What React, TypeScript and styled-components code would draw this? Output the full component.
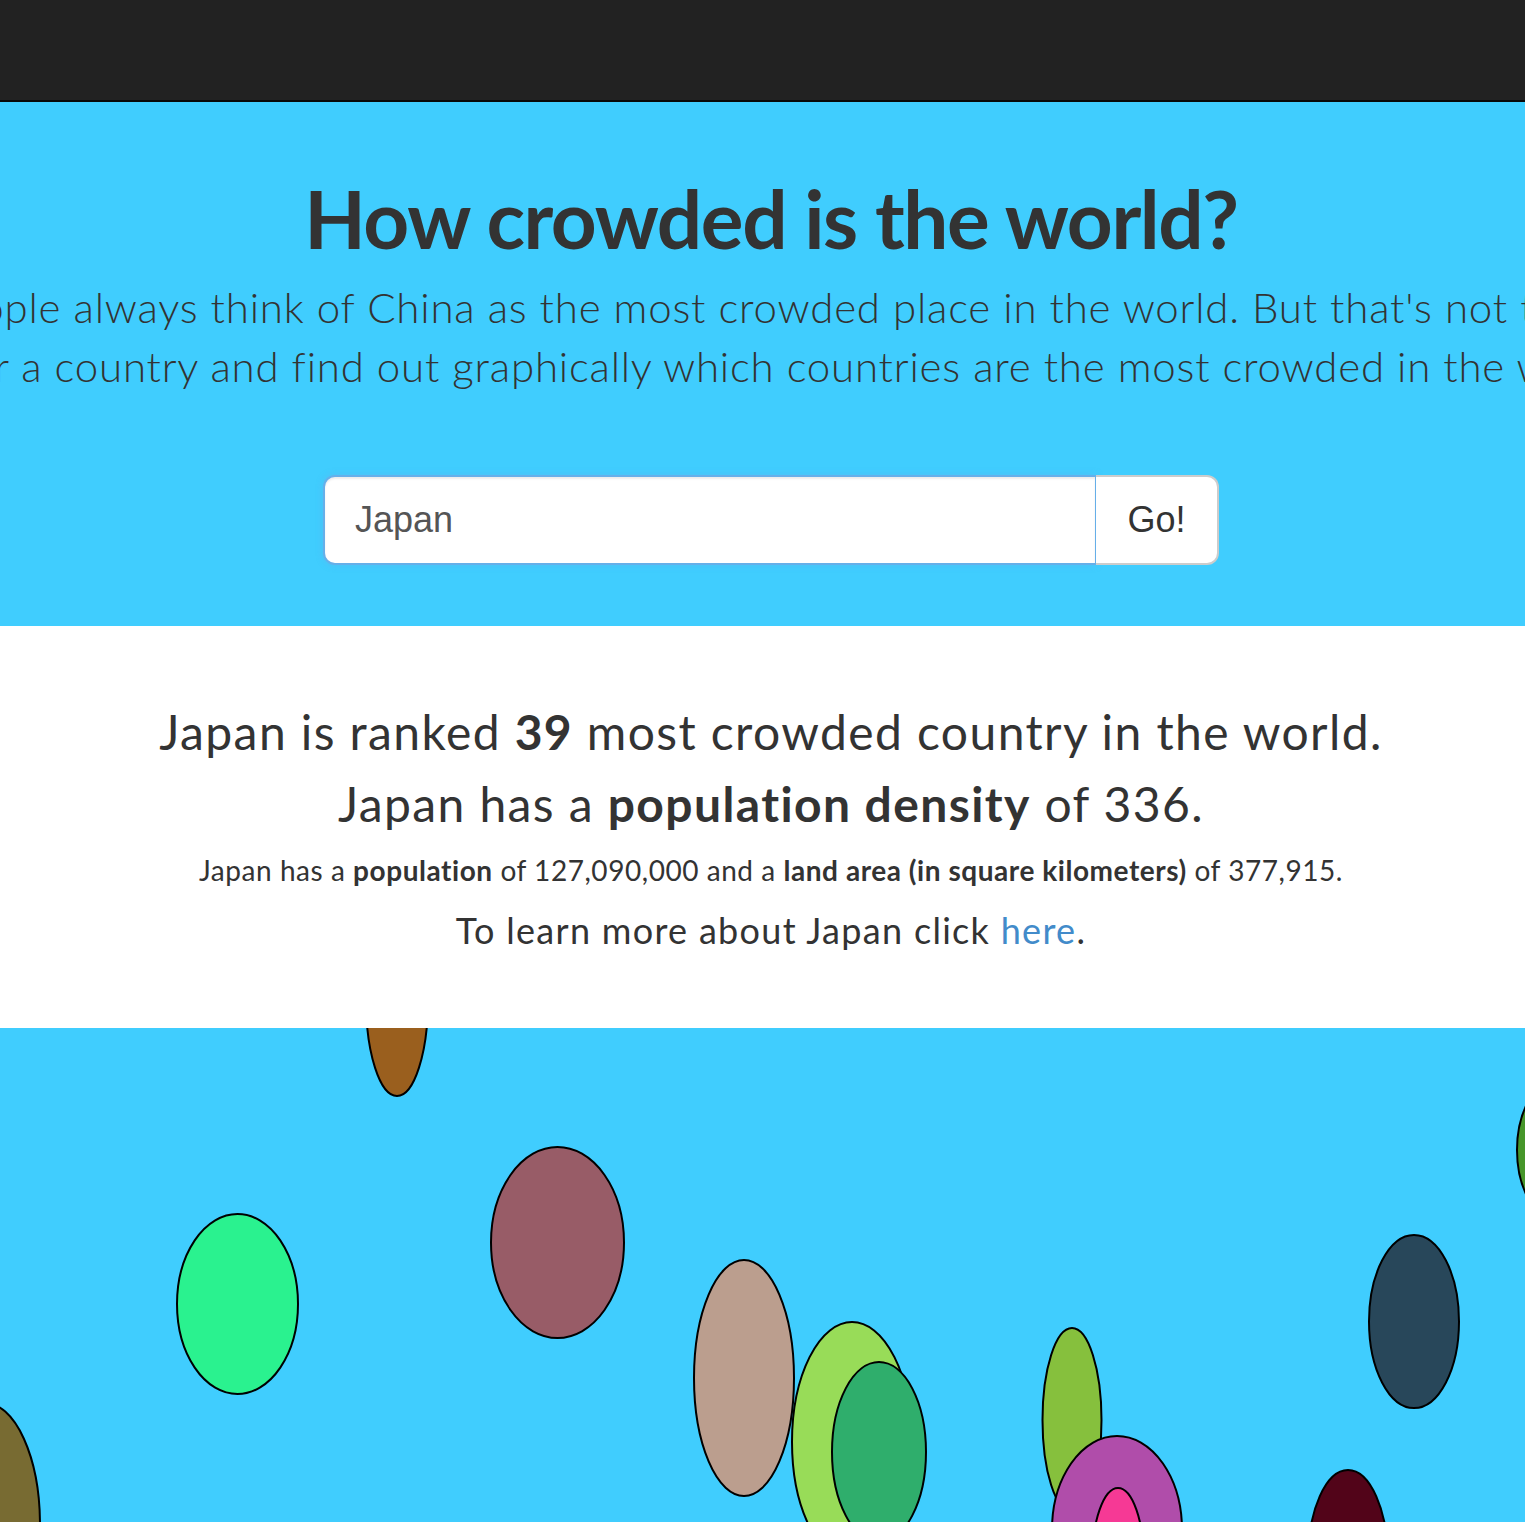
import styled, { createGlobalStyle } from 'styled-components';

const GlobalStyle = createGlobalStyle`
    html, body {
        margin: 0;
        padding: 0;
        background: #40cdfe;
    }
    body {
        font-family: Lato, "Open Sans", sans-serif;
        color: #333;
        overflow-x: hidden;
    }
`;

const Navbar = styled.nav`
    height: 100px;
    background-color: #222;
    border-bottom: 2px solid #080808;
`;

const Hero = styled.header`
    background-color: #40cdfe;
    padding: 68px 0 61px;
    overflow: hidden;
`;

/* everything on the page sits a little right of the window centre */
const Centered = styled.div`
    padding-left: 17px;
    display: flex;
    flex-direction: column;
    align-items: center;
    text-align: center;
`;

const Title = styled.h1`
    margin: 0 0 12px;
    font-size: 80px;
    line-height: 96px;
    font-weight: 700;
    letter-spacing: -1.4px;
`;

const Lead = styled.p`
    margin: 0;
    font-size: 42px;
    line-height: 59px;
    font-weight: 300;
    letter-spacing: 0.8px;
    white-space: nowrap;
`;

const SearchForm = styled.form`
    display: flex;
    width: 896px;
    height: 90px;
    margin-top: 79px;
`;

const SearchInput = styled.input`
    flex: 1;
    min-width: 0;
    box-sizing: border-box;
    height: 90px;
    padding: 0 30px;
    border: 2px solid #66afe9;
    border-right-width: 1px;
    border-radius: 12px 0 0 12px;
    box-shadow: inset 0 2px 2px rgba(0, 0, 0, 0.075), 0 0 6px rgba(102, 175, 233, 0.5);
    font-family: "Liberation Sans", Arial, sans-serif;
    font-size: 36px;
    color: #555;
    outline: none;
`;

const GoButton = styled.button`
    width: 123px;
    height: 90px;
    box-sizing: border-box;
    border: 2px solid #ccc;
    border-left: none;
    border-radius: 0 12px 12px 0;
    background: #fff;
    font-family: "Liberation Sans", Arial, sans-serif;
    font-size: 36px;
    color: #333;
    padding: 0;
    cursor: pointer;
`;

const Results = styled.section`
    background: #fff;
    padding: 74px 0 73px;
`;

const Headline = styled.h3`
    margin: 0 0 8px;
    font-size: 48px;
    line-height: 64px;
    font-weight: 400;
    letter-spacing: 1.4px;
`;

const Detail = styled.p<{ $size: number; $line: number; $top: number; $spacing: number }>`
    margin: ${(p) => p.$top}px 0 0;
    font-size: ${(p) => p.$size}px;
    line-height: ${(p) => p.$line}px;
    letter-spacing: ${(p) => p.$spacing}px;
    font-weight: 400;
`;

const Link = styled.a`
    color: #428bca;
    text-decoration: none;
`;

const Canvas = styled.svg`
    display: block;
    width: 100%;
    height: 494px;
    background: #40cdfe;
`;

interface Blob {
    cx: number;
    cy: number;
    rx: number;
    ry: number;
    fill: string;
}

// y is measured from the top of the canvas
const blobs: Blob[] = [
    { cx: 397, cy: -28, rx: 31, ry: 96, fill: '#9a5f1e' },
    { cx: 237.5, cy: 276, rx: 60.5, ry: 90, fill: '#2af28f' },
    { cx: 557.5, cy: 214.5, rx: 66.5, ry: 95.5, fill: '#985c67' },
    { cx: 1560, cy: 122, rx: 43, ry: 72, fill: '#46962a' },
    { cx: 1414, cy: 293.5, rx: 45, ry: 86.5, fill: '#28475a' },
    { cx: 744, cy: 350, rx: 50, ry: 118, fill: '#bb9e8e' },
    { cx: 852, cy: 414, rx: 60, ry: 120, fill: '#98dc58' },
    { cx: 879, cy: 424, rx: 47, ry: 90, fill: '#2fae6c' },
    { cx: 1072, cy: 392, rx: 29.5, ry: 92, fill: '#86c03d' },
    { cx: 1117, cy: 502, rx: 65, ry: 94, fill: '#b04daa' },
    { cx: 1118, cy: 534, rx: 26, ry: 74, fill: '#f63995' },
    { cx: 1348, cy: 532, rx: 40, ry: 90, fill: '#520419' },
    { cx: -15, cy: 497, rx: 55, ry: 122, fill: '#786b32' },
];

const App = () => {
    const country = 'Japan';

    return (
        <>
            <GlobalStyle />
            <Navbar />
            <Hero>
                <Centered>
                    <Title>How crowded is the world?</Title>
                    <Lead>People always think of China as the most crowded place in the world. But that's not true.</Lead>
                    <Lead>Enter a country and find out graphically which countries are the most crowded in the world.</Lead>
                    <SearchForm onSubmit={(e) => e.preventDefault()}>
                        <SearchInput defaultValue={country} />
                        <GoButton type="submit">Go!</GoButton>
                    </SearchForm>
                </Centered>
            </Hero>
            <Results>
                <Centered>
                    <Headline>
                        {country} is ranked <b>39</b> most crowded country in the world.
                    </Headline>
                    <Headline>
                        {country} has a <b>population density</b> of 336.
                    </Headline>
                    <Detail $size={28} $line={40} $top={6} $spacing={0.55}>
                        {country} has a <b>population</b> of 127,090,000 and a <b>land area (in square kilometers)</b> of 377,915.
                    </Detail>
                    <Detail $size={36} $line={50} $top={15} $spacing={1.3}>
                        To learn more about {country} click <Link href="#">here</Link>.
                    </Detail>
                </Centered>
            </Results>
            <Canvas viewBox="0 0 1525 494" preserveAspectRatio="xMinYMin slice">
                {blobs.map((b, i) => (
                    <ellipse key={i} cx={b.cx} cy={b.cy} rx={b.rx} ry={b.ry} fill={b.fill} stroke="#000" strokeWidth={2} />
                ))}
            </Canvas>
        </>
    );
};

export default App;
